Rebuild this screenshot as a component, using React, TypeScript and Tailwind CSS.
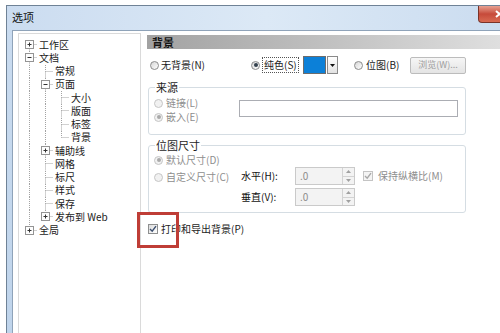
import React from "react";

type Node = { label: string; level: number; exp?: "+" | "-" };

const tree: Node[] = [
  { label: "工作区", level: 0, exp: "+" },
  { label: "文档", level: 0, exp: "-" },
  { label: "常规", level: 1 },
  { label: "页面", level: 1, exp: "-" },
  { label: "大小", level: 2 },
  { label: "版面", level: 2 },
  { label: "标签", level: 2 },
  { label: "背景", level: 2 },
  { label: "辅助线", level: 1, exp: "+" },
  { label: "网格", level: 1 },
  { label: "标尺", level: 1 },
  { label: "样式", level: 1 },
  { label: "保存", level: 1 },
  { label: "发布到 Web", level: 1, exp: "+" },
  { label: "全局", level: 0, exp: "+" },
];

const RH = 13.25;
const MID = 6.5;

// does the item at level k (current or ancestor) have a sibling further down?
const hasNext = (i: number, k: number) => {
  for (let j = i + 1; j < tree.length; j++) {
    if (tree[j].level < k) return false;
    if (tree[j].level === k) return true;
  }
  return false;
};

const dot = { stroke: "#a3a3a3", strokeWidth: 1, strokeDasharray: "1 1" };

const TreeRow = ({ node, i }: { node: Node; i: number }) => {
  const cells = [];
  for (let k = 0; k <= node.level; k++) {
    const own = k === node.level;
    const cont = hasNext(i, k);
    cells.push(
      <svg key={k} width={16} height={RH} className="shrink-0">
        {own ? (
          <>
            {i > 0 && <line x1={8.5} y1={0} x2={8.5} y2={MID} {...dot} />}
            {cont && <line x1={8.5} y1={MID} x2={8.5} y2={RH} {...dot} />}
            <line x1={8.5} y1={MID} x2={16} y2={MID} {...dot} />
            {node.exp && (
              <>
                <rect x={4.5} y={2.5} width={8} height={8} fill="#fdfdfd" stroke="#949494" />
                <line x1={6.5} y1={6.5} x2={10.5} y2={6.5} stroke="#333" />
                {node.exp === "+" && <line x1={8.5} y1={4.5} x2={8.5} y2={8.5} stroke="#333" />}
              </>
            )}
          </>
        ) : (
          cont && <line x1={8.5} y1={0} x2={8.5} y2={RH} {...dot} />
        )}
      </svg>
    );
  }
  return (
    <div className="flex h-[13.25px] items-center overflow-hidden">
      {cells}
      <span className="ml-[2px] whitespace-nowrap text-[10px] leading-[12px] text-[#1b1b1b]">{node.label}</span>
    </div>
  );
};

const Radio = ({ on, disabled }: { on?: boolean; disabled?: boolean }) => (
  <span
    className={
      disabled
        ? "flex h-[9px] w-[9px] shrink-0 items-center justify-center rounded-full border border-[#c6c6c6] bg-[#f1f1f1]"
        : "flex h-[9px] w-[9px] shrink-0 items-center justify-center rounded-full border border-[#8c8c8c] bg-gradient-to-br from-[#d6d6d6] to-white"
    }
  >
    {on && <span className={disabled ? "h-[4px] w-[4px] rounded-full bg-[#a9a9a9]" : "h-[4px] w-[4px] rounded-full bg-[#33404d]"} />}
  </span>
);

const Check = ({ disabled }: { disabled?: boolean }) => (
  <span
    className={
      disabled
        ? "flex h-[10px] w-[10px] shrink-0 items-center justify-center border border-[#c4c4c4] bg-[#f4f4f4]"
        : "flex h-[10px] w-[10px] shrink-0 items-center justify-center border border-[#8e8f8f] bg-gradient-to-br from-[#dcdcdc] to-white"
    }
  >
    <svg width="8" height="8" viewBox="0 0 8 8">
      <path d="M1 4 L3.2 6.2 L7 1.2" fill="none" stroke={disabled ? "#a8a8a8" : "#3a4d6e"} strokeWidth="1.4" />
    </svg>
  </span>
);

const Spin = () => (
  <div className="flex h-[18px] w-[60px] border border-[#cacaca] bg-[#f3f3f3]">
    <span className="flex-1 pl-[4px] text-[10px] leading-[15px] text-[#8c8c8c]">.0</span>
    <div className="flex w-[12px] flex-col border-l border-[#d3d3d3]">
      <span className="flex flex-1 items-center justify-center border-b border-[#d3d3d3]">
        <svg width="5" height="3" viewBox="0 0 5 3">
          <path d="M0 3 L2.5 0 L5 3 Z" fill="#a0a0a0" />
        </svg>
      </span>
      <span className="flex flex-1 items-center justify-center">
        <svg width="5" height="3" viewBox="0 0 5 3">
          <path d="M0 0 L2.5 3 L5 0 Z" fill="#a0a0a0" />
        </svg>
      </span>
    </div>
  </div>
);

const txt = "text-[10px] leading-[14px] whitespace-nowrap";

export default function App() {
  return (
    <div className="relative h-[333px] w-[500px] overflow-hidden bg-white font-['Noto_Sans_CJK_SC','Noto_Sans',sans-serif] text-[#1d1d1d]">
      {/* window */}
      <div className="ml-[6px] mt-[5px] flex h-[340px] w-[520px] flex-col border-l border-t border-[#6f8296] bg-gradient-to-b from-[#cadcf0] to-[#bfd4eb]">
        <div className="flex h-[24px] shrink-0 items-start bg-gradient-to-r from-[#cbdcf0] via-[#dce9f6] to-[#c9dbef]">
          <span className="pl-[5px] pt-[4px] text-[11px] leading-[14px] text-[#111]">选项</span>
          <div className="ml-auto mr-[5px] flex h-[17px] w-[43px] items-center justify-center rounded-b-[4px] border border-t-0 border-[#7a3328] bg-gradient-to-b from-[#e6a092] via-[#c64a3a] to-[#d86a52]">
            <svg width="9" height="8" viewBox="0 0 9 8">
              <path d="M1 1 L8 7 M8 1 L1 7" stroke="#fff" strokeWidth="2" />
            </svg>
          </div>
        </div>
        <div className="flex flex-1 pl-[5px]">
          <div className="flex flex-1 border-l border-t border-[#8fa3b9] bg-white">
            {/* tree */}
            <div className="ml-[5px] mt-[2px] w-[123px] shrink-0 border border-[#dadada] pl-[2px] pt-[4px]">
              {tree.map((n, i) => (
                <TreeRow key={i} node={n} i={i} />
              ))}
            </div>

            {/* settings */}
            <div className="ml-[6px] mt-[4px] w-[360px] shrink-0">
              <div className="h-[14px] bg-gradient-to-r from-[#a2a2a2] to-[#e0e0e0] pl-[5px] text-[11px] font-bold leading-[14px] text-[#151515]">
                背景
              </div>

              <div className="mt-[7px] flex h-[18px] items-center">
                <div className="flex w-[104px] items-center pl-[3px]">
                  <Radio />
                  <span className={`ml-[2px] ${txt}`}>无背景(N)</span>
                </div>
                <div className="flex w-[52px] items-center">
                  <Radio on />
                  <span className={`ml-[2px] border border-dotted border-[#555] px-[1px] ${txt} leading-[12px]`}>纯色(S)</span>
                </div>
                <span className="h-[18px] w-[23px] border border-[#6c6c6c] bg-[#0c80d8]" />
                <span className="ml-[1px] flex h-[18px] w-[11px] items-center justify-center border border-[#8a8a8a] bg-gradient-to-b from-white to-[#e2e2e2]">
                  <svg width="5" height="3" viewBox="0 0 5 3">
                    <path d="M0 0 L2.5 3 L5 0 Z" fill="#111" />
                  </svg>
                </span>
                <div className="ml-[16px] flex w-[56px] items-center">
                  <Radio />
                  <span className={`ml-[3px] ${txt}`}>位图(B)</span>
                </div>
                <span className="flex h-[17px] w-[56px] items-center justify-center rounded-[2px] border border-[#bcbcbc] bg-gradient-to-b from-[#f6f6f6] to-[#e4e4e4] text-[9px] leading-[12px] text-[#9d9d9d]">
                  浏览(W)...
                </span>
              </div>

              <fieldset className="ml-[1px] mt-[6px] w-[318px] rounded-[3px] border border-[#d5dde3] pb-[10px]">
                <legend className="ml-[6px] px-[1px] text-[11px] leading-[14px]">来源</legend>
                <div className="flex">
                  <div className="w-[90px] pl-[5px]">
                    <div className="mt-[2px] flex h-[14px] items-center">
                      <Radio disabled />
                      <span className={`ml-[3px] text-[#8e8e8e] ${txt}`}>链接(L)</span>
                    </div>
                    <div className="flex h-[14px] items-center">
                      <Radio on disabled />
                      <span className={`ml-[3px] text-[#8e8e8e] ${txt}`}>嵌入(E)</span>
                    </div>
                  </div>
                  <span className="mt-[6px] h-[17px] w-[219px] border border-[#abadb3] bg-white" />
                </div>
              </fieldset>

              <fieldset className="ml-[1px] mt-[3px] w-[318px] rounded-[3px] border border-[#d5dde3] pb-[6px]">
                <legend className="ml-[6px] px-[1px] text-[11px] leading-[14px]">位图尺寸</legend>
                <div className="mt-[1px] flex h-[14px] items-center pl-[5px]">
                  <Radio on disabled />
                  <span className={`ml-[3px] text-[#8e8e8e] ${txt}`}>默认尺寸(D)</span>
                </div>
                <div className="flex">
                  <div className="w-[92px] pl-[5px]">
                    <div className="mt-[3px] flex h-[14px] items-center">
                      <Radio disabled />
                      <span className={`ml-[3px] text-[#8e8e8e] ${txt}`}>自定义尺寸(C)</span>
                    </div>
                  </div>
                  <div className="flex w-[54px] flex-col gap-[3px]">
                    <span className="text-[10px] leading-[18px] text-[#111]">水平(H):</span>
                    <span className="text-[10px] leading-[18px] text-[#111]">垂直(V):</span>
                  </div>
                  <div className="flex flex-col gap-[3px]">
                    <Spin />
                    <Spin />
                  </div>
                  <div className="ml-[8px] flex h-[18px] items-center">
                    <Check disabled />
                    <span className={`ml-[5px] text-[#8e8e8e] ${txt}`}>保持纵横比(M)</span>
                  </div>
                </div>
              </fieldset>

              <div className="ml-[1px] mt-[9px] flex h-[14px] items-center">
                <Check />
                <span className={`ml-[3px] ${txt}`}>打印和导出背景(P)</span>
              </div>
            </div>
          </div>
        </div>
      </div>

      {/* red annotation frame */}
      <div className="absolute left-[137px] top-[212px] h-[36px] w-[42px] border-[3px] border-[#bf3d36]" />
    </div>
  );
}
